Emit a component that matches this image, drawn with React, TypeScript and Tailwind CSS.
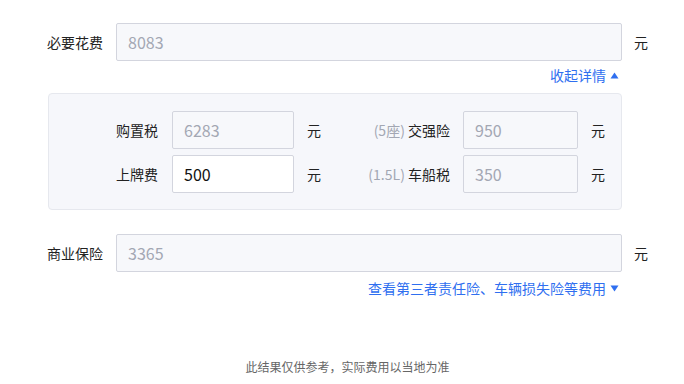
import React from 'react';

const Yuan: React.FC<{ className?: string }> = ({ className }) => (
  <span className={`text-[14px] text-[#222] ${className ?? ''}`}>元</span>
);

const Caret: React.FC<{ up?: boolean }> = ({ up }) => (
  <svg width="9" height="7" viewBox="0 0 9 7" className="ml-[4px]">
    {up ? <path d="M4.5 0.5 L8.5 6.5 L0.5 6.5 Z" fill="#2f6ff0" /> : <path d="M0.5 0.5 L8.5 0.5 L4.5 6.5 Z" fill="#2f6ff0" />}
  </svg>
);

const Field: React.FC<{ value: string; width: string; editable?: boolean }> = ({ value, width, editable }) => (
  <div
    className={`${width} h-[38px] flex items-center px-[11px] border border-[#d3d5de] rounded-[2px] text-[16px] ${
      editable ? 'bg-white text-[#111]' : 'bg-[#f7f8fb] text-[#a3a7b3]'
    }`}
  >
    {value}
  </div>
);

const App: React.FC = () => {
  return (
    <div className="w-[684px] h-[384px] bg-white font-['Noto_Sans_CJK_SC','Noto_Sans',sans-serif] text-[#222] overflow-hidden">
      <div className="w-[601px] ml-[47px] pt-[23px]">
        {/* necessary costs */}
        <div className="flex items-center">
          <span className="w-[56px] text-[14px]">必要花费</span>
          <div className="ml-[13px]">
            <Field value="8083" width="w-[506px]" />
          </div>
          <Yuan className="ml-[12px]" />
        </div>
        <div className="w-[572px] flex items-center justify-end mt-[4px] h-[20px] text-[14px] text-[#2f6ff0]">
          收起详情
          <Caret up />
        </div>

        {/* detail panel */}
        <div className="mt-[8px] ml-[1px] w-[574px] h-[117px] bg-[#f6f7fb] border border-[#e6e8ee] rounded-[4px] pt-[17px] flex flex-col gap-[6px]">
          <div className="flex items-center">
            <span className="w-[109px] text-right text-[14px]">购置税</span>
            <div className="ml-[14px]">
              <Field value="6283" width="w-[122px]" />
            </div>
            <Yuan className="ml-[13px]" />
            <span className="w-[129px] text-right text-[14px]">
              <span className="text-[#a3a7b3]">(5座)</span> 交强险
            </span>
            <div className="ml-[13px]">
              <Field value="950" width="w-[115px]" />
            </div>
            <Yuan className="ml-[13px]" />
          </div>
          <div className="flex items-center">
            <span className="w-[109px] text-right text-[14px]">上牌费</span>
            <div className="ml-[14px]">
              <Field value="500" width="w-[122px]" editable />
            </div>
            <Yuan className="ml-[13px]" />
            <span className="w-[129px] text-right text-[14px]">
              <span className="text-[#a3a7b3]">(1.5L)</span> 车船税
            </span>
            <div className="ml-[13px]">
              <Field value="350" width="w-[115px]" />
            </div>
            <Yuan className="ml-[13px]" />
          </div>
        </div>

        {/* commercial insurance */}
        <div className="flex items-center mt-[24px]">
          <span className="w-[56px] text-[14px]">商业保险</span>
          <div className="ml-[13px]">
            <Field value="3365" width="w-[506px]" />
          </div>
          <Yuan className="ml-[12px]" />
        </div>
        <div className="w-[572px] flex items-center justify-end mt-[6px] h-[20px] text-[14px] text-[#2f6ff0]">
          查看第三者责任险、车辆损失险等费用
          <Caret />
        </div>

        <div className="mt-[60px] h-[18px] text-center text-[12px] text-[#666]">此结果仅供参考，实际费用以当地为准</div>
      </div>
    </div>
  );
};

export default App;
